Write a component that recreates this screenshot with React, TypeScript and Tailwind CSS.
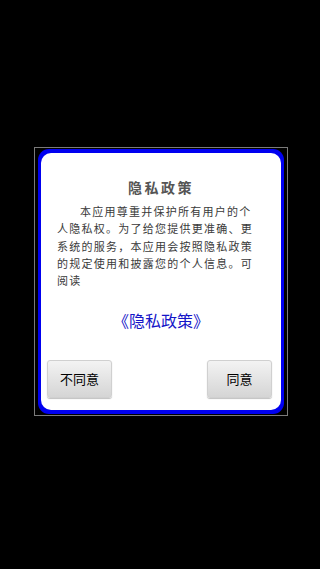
import React from "react";

const cjk = { fontFamily: '"Noto Sans CJK SC", "Noto Sans", sans-serif' };

export default function App() {
  return (
    <div className="w-[320px] h-[569px] bg-black pt-[147px] pl-[34px]" style={cjk}>
      <div className="w-[254px] h-[269px] border border-[#7a7a7a] bg-black px-[3px] py-[1px]">
        <div className="h-full bg-[#0000f0] rounded-[11px] px-[3px] py-[4px]">
          <div className="h-full bg-white rounded-[10px] flex flex-col">

            <div className="pt-[24px] text-center text-[14px] leading-[20px] font-bold tracking-[2.5px] text-[#555]">
              隐私政策
            </div>

            <p className="mt-[6px] pl-4 pr-[26px] text-[11px] leading-[17.25px] tracking-[1.25px] indent-[23px] text-[#3a3a3a]">
              本应用尊重并保护所有用户的个人隐私权。为了给您提供更准确、更系统的服务，本应用会按照隐私政策的规定使用和披露您的个人信息。可阅读
            </p>

            <div className="mt-[20px] text-center text-[16px] leading-[23px] text-[#1515c8]">
              《隐私政策》
            </div>

            <div className="mt-auto pb-[12px] pl-[6px] pr-[9px] flex justify-between">
              <button className="w-[65px] h-[38px] rounded-[3px] bg-gradient-to-b from-[#f3f3f3] to-[#d5d5d5] border border-[#d0d0d0] shadow-[0_1px_1px_rgba(0,0,0,0.25)] text-[13px] text-black">
                不同意
              </button>
              <button className="w-[65px] h-[38px] rounded-[3px] bg-gradient-to-b from-[#f3f3f3] to-[#d5d5d5] border border-[#d0d0d0] shadow-[0_1px_1px_rgba(0,0,0,0.25)] text-[13px] text-black">
                同意
              </button>
            </div>

          </div>
        </div>
      </div>
    </div>
  );
}
